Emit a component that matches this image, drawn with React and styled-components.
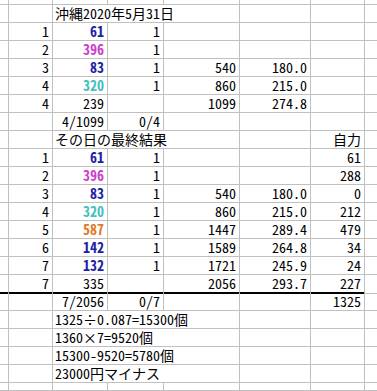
import React from 'react';
import styled, { createGlobalStyle } from 'styled-components';

const Global = createGlobalStyle`
    html, body {
        margin: 0;
        padding: 0;
        background: #ffffff;
    }
    body {
        width: 377px;
        height: 391px;
        overflow: hidden;
    }
`;

const COLS = '9px 44px 55px 56px 76px 71px 54px 12px';
const GRID = '#c0c0c0';

const BLUE = '#1f1fa6';
const MAGENTA = '#cc3fcc';
const TEAL = '#45c0c0';
const ORANGE = '#e07a2a';

const Sheet = styled.div`
    display: flex;
    flex-direction: column;
    width: 377px;
    height: 391px;
    overflow: hidden;
    font-family: "Noto Sans Mono CJK JP", "Noto Sans CJK JP", "DejaVu Sans Mono", monospace;
    font-size: 14px;
    color: #000000;
`;

const Row = styled.div`
    display: grid;
    grid-template-columns: ${COLS};
    height: ${(p) => p.$h || 18}px;
    flex: none;
`;

const Cell = styled.div`
    box-sizing: border-box;
    display: flex;
    align-items: flex-start;
    justify-content: ${(p) => (p.$left ? 'flex-start' : 'flex-end')};
    grid-column: span ${(p) => p.$span || 1};
    border-right: ${(p) => (p.$edge ? 0 : 1)}px solid ${GRID};
    border-bottom: ${(p) => (p.$thick ? `2px solid #000000` : `1px solid ${GRID}`)};
    padding-right: ${(p) => (p.$left ? 0 : 3)}px;
    padding-left: ${(p) => (p.$left ? 2 : 0)}px;
    line-height: 17px;
    white-space: nowrap;
    color: ${(p) => p.$color || '#000000'};
    font-weight: ${(p) => (p.$bold ? 700 : 400)};
`;

const B = (t, color) => ({ t, color, bold: true });
const span = (t) => ({ t, span: 3, left: true });

const rows = [
    ['', span('沖縄2020年5月31日'), '', ''],
    ['1', B('61', BLUE), '1', '', '', ''],
    ['2', B('396', MAGENTA), '1', '', '', ''],
    ['3', B('83', BLUE), '1', '540', '180.0', ''],
    ['4', B('320', TEAL), '1', '860', '215.0', ''],
    ['4', '239', '', '1099', '274.8', ''],
    ['', '4/1099', '0/4', '', '', ''],
    ['', span('その日の最終結果'), '', '自力'],
    ['1', B('61', BLUE), '1', '', '', '61'],
    ['2', B('396', MAGENTA), '1', '', '', '288'],
    ['3', B('83', BLUE), '1', '540', '180.0', '0'],
    ['4', B('320', TEAL), '1', '860', '215.0', '212'],
    ['5', B('587', ORANGE), '1', '1447', '289.4', '479'],
    ['6', B('142', BLUE), '1', '1589', '264.8', '34'],
    ['7', B('132', BLUE), '1', '1721', '245.9', '24'],
    ['7', '335', '', '2056', '293.7', '227'],
    ['', '7/2056', '0/7', '', '', '1325'],
    ['', span('1325÷0.087=15300個'), '', ''],
    ['', span('1360×7=9520個'), '', ''],
    ['', span('15300-9520=5780個'), '', ''],
    ['', span('23000円マイナス'), '', ''],
];

// the row with the black rule under it
const THICK_ROW = 15;

const BlankRow = ({ h }) => (
    <Row $h={h}>
        {Array.from({ length: 8 }).map((_, i) => (
            <Cell key={i} $edge={i === 7} />
        ))}
    </Row>
);

const App = () => {
    return (
        <>
            <Global />
            <Sheet>
                <BlankRow h={5} />
                {rows.map((cells, r) => {
                    const thick = r === THICK_ROW;
                    return (
                        <Row key={r}>
                            <Cell $thick={thick} />
                            {cells.map((c, i) => {
                                const cell = typeof c === 'string' ? { t: c } : c;
                                return (
                                    <Cell
                                        key={i}
                                        $span={cell.span}
                                        $left={cell.left}
                                        $color={cell.color}
                                        $bold={cell.bold}
                                        $thick={thick}
                                    >
                                        {cell.t}
                                    </Cell>
                                );
                            })}
                            <Cell $edge />
                        </Row>
                    );
                })}
                <BlankRow h={8} />
            </Sheet>
        </>
    );
};

export default App;
